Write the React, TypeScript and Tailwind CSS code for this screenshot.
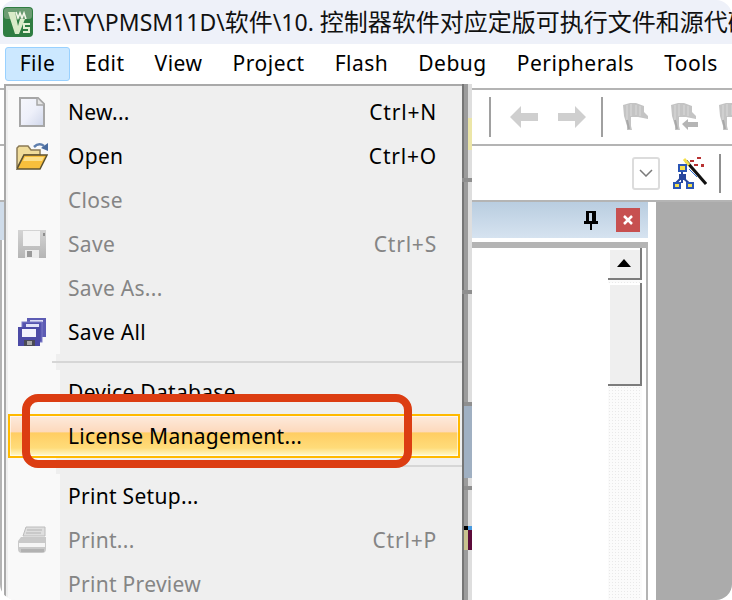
const uiFont = { fontFamily: '"Noto Sans", "Noto Sans CJK SC", sans-serif' };

const menuBar = ["Edit", "View", "Project", "Flash", "Debug", "Peripherals", "Tools"];

function AppLogo() {
  return (
    <svg width="30" height="30" viewBox="0 0 30 30" className="shrink-0">
      <rect x="0" y="0" width="30" height="30" rx="4" fill="#2f7d42" />
      <rect x="1" y="1" width="28" height="11" rx="3" fill="#6b9c72" />
      <path d="M5 5 H12 L15 19 L17 12 L22 12 L16 27 H12 Z" fill="#d9ebc8" />
      <path d="M13 5 l2 6 l2 -5 l2 5 l2 -5 l2 6" stroke="#f2f7e8" strokeWidth="1.600" fill="none" />
      <path d="M27 17 h-6 v4 h5 v4 h-6" stroke="#e4f0d4" strokeWidth="2" fill="none" />
    </svg>
  );
}

function NewIcon() {
  return (
    <svg width="26" height="30" viewBox="0 0 26 30">
      <defs>
        <linearGradient id="newFill" x1="0" y1="0" x2="1" y2="1">
          <stop offset="0" stopColor="#f6f7fc" />
          <stop offset="0.5" stopColor="#eef0fa" />
          <stop offset="1" stopColor="#cfd6ea" />
        </linearGradient>
      </defs>
      <path d="M1 1 H19 L25 7 V29 H1 Z" fill="url(#newFill)" stroke="#a6a6a6" strokeWidth="2" />
      <path d="M18 1 V8 H25" fill="#e6e6e6" stroke="#a6a6a6" strokeWidth="1.500" />
    </svg>
  );
}

function OpenIcon() {
  return (
    <svg width="32" height="28" viewBox="0 0 32 28">
      <path d="M1 26 V6 L3 4 H12 L15 8 H24 V13 H8 Z" fill="#f0dc9a" stroke="#8a7a55" strokeWidth="1.500" />
      <path d="M1 27 L8 13 H31 L24 27 Z" fill="#f8bf3c" stroke="#5d5230" strokeWidth="1.500" />
      <path d="M9 15 H28 L26 19 H7 Z" fill="#fde08a" />
      <path d="M18 5 Q23 0 28 4" stroke="#5f7fae" strokeWidth="2.500" fill="none" />
      <path d="M32 9 L32 1 L25 6 Z" fill="#4a6c9f" />
    </svg>
  );
}

function SaveGreyIcon() {
  return (
    <svg width="28" height="28" viewBox="0 0 28 28">
      <defs>
        <linearGradient id="saveFill" x1="0" y1="0" x2="0" y2="1">
          <stop offset="0" stopColor="#d4d4d4" />
          <stop offset="1" stopColor="#b5b5b5" />
        </linearGradient>
      </defs>
      <rect width="28" height="28" fill="url(#saveFill)" />
      <rect x="5" y="1" width="17" height="15" fill="#f4f4f4" />
      <rect x="25" y="3" width="2" height="3" fill="#8f8f8f" />
      <rect x="7" y="20" width="14" height="8" fill="#ececec" />
      <rect x="9" y="21" width="5" height="6" fill="#9a9a9a" />
    </svg>
  );
}

function SaveAllIcon() {
  return (
    <svg width="28" height="28" viewBox="0 0 28 28">
      <rect x="9" y="0" width="19" height="19" fill="#5d5cb4" />
      <rect x="12" y="2" width="13" height="2" fill="#dcdcf5" />
      <rect x="4" y="4" width="20" height="20" fill="#5453ae" stroke="#7d7cc8" />
      <rect x="8" y="6" width="13" height="3" fill="#e3e3f8" />
      <rect x="0" y="9" width="22" height="19" fill="#4c4aa6" />
      <rect x="4" y="11" width="14" height="8" fill="#f2f2fc" />
      <rect x="6" y="22" width="11" height="6" fill="#4b4b55" />
      <rect x="9" y="23" width="5" height="4" fill="#a9a9a9" />
    </svg>
  );
}

function PrintIcon() {
  return (
    <svg width="30" height="28" viewBox="0 0 30 28">
      <path d="M9 1 H28 V10 H6 Z" fill="#dedede" stroke="#bcbcbc" />
      <path d="M10 4 H25 M9 7 H24" stroke="#b4b4b4" />
      <path d="M4 11 H29 V23 Q29 27 25 27 H5 Q1 27 1 23 V15 Z" fill="#c9c9c9" />
      <rect x="2" y="17" width="26" height="4" fill="#f5f5f5" />
      <rect x="4" y="23" width="23" height="3" fill="#b2b2b2" />
    </svg>
  );
}

function GreyFlag({ back }: { back?: boolean }) {
  return (
    <svg width="28" height="30" viewBox="0 0 28 30">
      <path d="M1 3 L8 1 H14 L22 4 V10 L26 14 V17 L16 15 H9 V24 L10 28 H5 V24 L2 14 Z" fill="#c4c4c4" />
      <path d="M5 3 V18 M9 2 V14 M14 3 V13 M18 4 V14" stroke="#dadada" />
      <path d="M5 18 L7 27" stroke="#a8a8a8" strokeWidth="2" />
      {back && <path d="M12 22 L18 17 V20 H28 V25 H18 V28 Z" fill="#b5b5b5" />}
    </svg>
  );
}

function WandIcon() {
  return (
    <svg width="34" height="32" viewBox="0 0 34 32">
      <path d="M13 4 L33 27" stroke="#111" strokeWidth="3" />
      <path d="M16 12 L24 20" stroke="#2f6fd0" strokeWidth="1" />
      <path d="M11 2 L16 8" stroke="#f4e04d" strokeWidth="3" />
      <rect x="17" y="3" width="4" height="2" fill="#b83232" />
      <rect x="24" y="0" width="4" height="2" fill="#b83232" />
      <rect x="21" y="7" width="4" height="2" fill="#b83232" />
      <rect x="28" y="7" width="3" height="3" fill="#b83232" />
      <path d="M9 12 V26 M9 20 L2 27 M9 20 L17 27" stroke="#27469c" strokeWidth="2" fill="none" />
      <rect x="6" y="8" width="7" height="6" fill="#f4e04d" stroke="#2a55b5" strokeWidth="2" />
      <rect x="6" y="17" width="7" height="6" fill="#27469c" />
      <rect x="1" y="26" width="6" height="5" fill="#f4e04d" stroke="#2a55b5" strokeWidth="2" />
      <rect x="14" y="26" width="6" height="5" fill="#f4e04d" stroke="#2a55b5" strokeWidth="2" />
    </svg>
  );
}

function MenuRow({
  label,
  shortcut,
  icon,
  disabled,
}: {
  label: string;
  shortcut?: string;
  icon?: React.ReactNode;
  disabled?: boolean;
}) {
  return (
    <div className="flex h-[44px] items-center">
      <div className="flex w-[52px] shrink-0 items-center justify-center self-stretch bg-[#f9f9f9] pr-[5px]">
        {icon}
      </div>
      <div
        className={`flex flex-1 items-center justify-between pl-[8px] pr-[25px] pt-[2px] text-[21px] tracking-[0.3px] ${
          disabled ? "text-[#858585]" : "text-black"
        }`}
      >
        <span>{label}</span>
        {shortcut && <span className="tracking-[0.8px]">{shortcut}</span>}
      </div>
    </div>
  );
}

function Separator() {
  return (
    <div className="flex h-[16px] items-center">
      <div className="h-full w-[48px] shrink-0 bg-[#f9f9f9]" />
      <div className="-ml-[4px] h-[2px] flex-1 bg-[#d6d6d6]" />
    </div>
  );
}

function FileMenu() {
  return (
    <div className="absolute left-[4px] top-[84px] flex h-[540px] w-[468px]">
      <div className="w-[458px] border-l-2 border-t-2 border-[#a9a9a9] bg-[#efefef] pl-[2px] pt-[4px]">
        <MenuRow label="New..." shortcut="Ctrl+N" icon={<NewIcon />} />
        <MenuRow label="Open" shortcut="Ctrl+O" icon={<OpenIcon />} />
        <MenuRow label="Close" disabled />
        <MenuRow label="Save" shortcut="Ctrl+S" icon={<SaveGreyIcon />} disabled />
        <MenuRow label="Save As..." disabled />
        <MenuRow label="Save All" icon={<SaveAllIcon />} />
        <Separator />
        <MenuRow label="Device Database" />
        <div className="mr-[2px] flex h-[44px] items-center border-2 border-[#ffb900] bg-[linear-gradient(to_bottom,#fdeadc_0%,#fdd9bc_40%,#ffcd63_42%,#ffdc7a_80%,#fffbd0_100%)] pt-[2px] text-[21px] tracking-[0.3px] text-black shadow-[inset_0_0_0_1px_rgba(255,255,255,0.55)]">
          <span className="pl-[58px]">License Management...</span>
        </div>
        <Separator />
        <MenuRow label="Print Setup..." />
        <MenuRow label="Print..." shortcut="Ctrl+P" icon={<PrintIcon />} disabled />
        <MenuRow label="Print Preview" disabled />
      </div>
      <div className="relative w-[10px] bg-[linear-gradient(to_right,#767676_0%,#767676_20%,#9c9c9c_20%,#9c9c9c_60%,#dedede_60%,#dedede_100%)]">
        <div className="absolute left-[6px] top-[34px] h-[32px] w-[4px] bg-[#ece6a8]" />
        <div className="absolute left-0 top-[94px] h-[4px] w-[10px] bg-[#8f8f8f]" />
        <div className="absolute left-0 top-[206px] h-[4px] w-[10px] bg-[#8f8f8f]" />
        <div className="absolute left-[2px] top-[318px] h-[4px] w-[8px] bg-[#8f8f8f]" />
        <div className="absolute left-[2px] top-[322px] h-[72px] w-[8px] bg-[#a0b0c2]" />
        <div className="absolute left-[2px] top-[402px] h-[4px] w-[8px] bg-[#8f8f8f]" />
        <div className="absolute left-[2px] top-[442px] h-[4px] w-[8px] bg-[linear-gradient(to_right,#000_50%,#4a9be0_50%)]" />
        <div className="absolute left-[2px] top-[446px] h-[20px] w-[8px] bg-[linear-gradient(to_right,#c9c28f_50%,#5c0b3a_50%)]" />
      </div>
    </div>
  );
}

export default function App() {
  return (
    <div className="relative h-[600px] w-[732px] overflow-hidden rounded-[16px] bg-white" style={uiFont}>
      <div className="flex h-full flex-col">
        <div className="flex h-[44px] shrink-0 items-center gap-[10px] overflow-hidden whitespace-nowrap bg-[#eef1f9] pl-[3px] text-[#111]">
          <AppLogo />
          <span className="text-[23px]">
            E:\TY\PMSM11D\<span className="text-[24px]">软件</span>\10. <span className="text-[24px]">控制器软件对应定版可执行文件和源代码</span>
          </span>
        </div>

        <div className="flex h-[44px] shrink-0 items-start bg-white pl-[5px] pt-[3px] text-[21px] tracking-[0.5px] text-black">
          <div className="flex h-[34px] w-[65px] shrink-0 items-center justify-center rounded-[3px] border border-[#99d1ff] bg-[#cce8ff]">
            File
          </div>
          {menuBar.map((item) => (
            <span key={item} className="flex h-[34px] shrink-0 items-center px-[15px]">
              {item}
            </span>
          ))}
        </div>

        <div className="flex h-[58px] shrink-0 items-center border-y-2 border-[#b4b4b4] pl-[489px]">
          <div className="h-[40px] w-[2px] shrink-0 bg-[#a0a0a0]" />
          <div className="flex w-[110px] shrink-0 items-center justify-center gap-[20px] pl-[4px]">
            <svg width="28" height="22" viewBox="0 0 28 22">
              <path d="M0 11 L11 0 V7 H28 V15 H11 V22 Z" fill="#cfcfcf" />
            </svg>
            <svg width="28" height="22" viewBox="0 0 28 22">
              <path d="M28 11 L17 0 V7 H0 V15 H17 V22 Z" fill="#cfcfcf" />
            </svg>
          </div>
          <div className="h-[40px] w-[2px] shrink-0 bg-[#a0a0a0]" />
          <div className="ml-[19px] flex shrink-0 gap-[20px]">
            <GreyFlag />
            <GreyFlag back />
            <GreyFlag />
          </div>
        </div>

        <div className="flex h-[54px] shrink-0 items-center pl-[632px]">
          <div className="flex h-[33px] w-[28px] shrink-0 items-center justify-center rounded-[3px] border-2 border-[#dcdcdc]">
            <svg width="14" height="8" viewBox="0 0 14 8">
              <path d="M1 1 L7 7 L13 1" stroke="#7a7a7a" strokeWidth="1.500" fill="none" />
            </svg>
          </div>
          <div className="ml-[13px] shrink-0">
            <WandIcon />
          </div>
          <div className="ml-[12px] h-[39px] w-[2px] shrink-0 bg-[#8f8f8f]" />
        </div>

        <div className="flex flex-1 border-t-2 border-[#b4b4b4]">
          <div className="flex w-[4px] shrink-0 flex-col">
            <div className="h-[38px] bg-[#cfdcea]" />
            <div className="flex-1 border-l-2 border-[#b4b4b4]" />
          </div>
          <div className="flex w-[652px] shrink-0 flex-col pl-[468px]">
            <div className="flex h-[36px] w-[176px] shrink-0 items-center justify-end bg-[linear-gradient(to_bottom,#b9cde0,#d6e3f0)] pr-[8px]">
              <svg width="16" height="20" viewBox="0 0 16 20" className="mr-[17px]">
                <path d="M3 1 H13 V11 H15 V14 H9 V20 H7 V14 H1 V11 H3 Z M6 3 V11 H9 V3 Z" fill="#000" fillRule="evenodd" />
              </svg>
              <div className="flex h-[24px] w-[24px] items-center justify-center bg-[#c75050]">
                <svg width="10" height="10" viewBox="0 0 10 10">
                  <path d="M1 1 L9 9 M9 1 L1 9" stroke="#fff" strokeWidth="2.500" />
                </svg>
              </div>
            </div>
            <div className="mt-[4px] flex w-[176px] flex-1 border-r-2 border-t-[6px] border-[#b4b4b4] bg-white">
              <div className="w-[136px] shrink-0" />
              <div className="flex w-[34px] shrink-0 flex-col bg-[radial-gradient(#e9e9e9_1px,#fbfbfb_1px)] bg-[length:3px_3px]">
                <div className="flex h-[32px] items-center justify-center border-b-2 border-r-2 border-[#7c7c7c] bg-[#efefef] shadow-[inset_2px_2px_0_#fff]">
                  <svg width="14" height="8" viewBox="0 0 14 8">
                    <path d="M7 0 L14 8 H0 Z" fill="#000" />
                  </svg>
                </div>
                <div className="mt-[3px] h-[103px] border-b-2 border-r-2 border-[#7c7c7c] bg-[#efefef] shadow-[inset_2px_2px_0_#fff]" />
              </div>
            </div>
          </div>
          <div className="flex-1 bg-[#ababab]" />
        </div>
      </div>

      <FileMenu />

      <div className="absolute left-[22px] top-[394px] h-[74px] w-[390px] rounded-[16px] border-[8px] border-[#dc3d12]" />
    </div>
  );
}
